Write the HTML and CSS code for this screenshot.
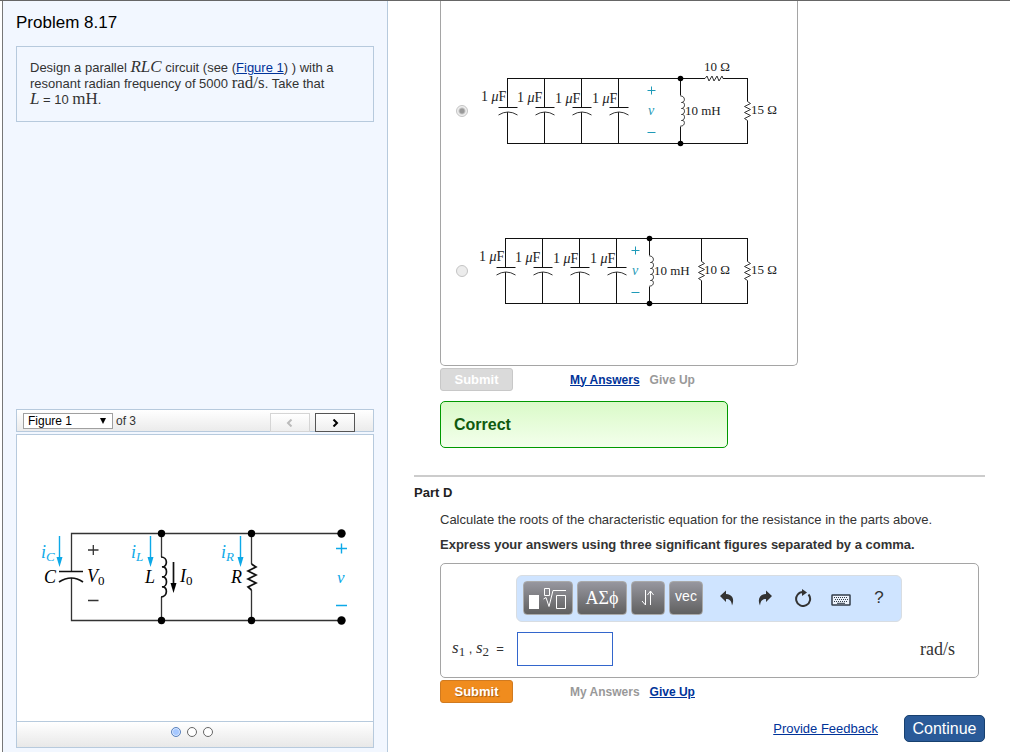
FILE: index.html
```html
<!DOCTYPE html>
<html lang="en">
<head>
<meta charset="utf-8">
<title>Problem 8.17</title>
<link rel="stylesheet" href="styles.css">
</head>
<body>
<svg class="defs" aria-hidden="true">
  <defs>
    <g id="cap">
      <path class="wire" d="M0 0V29M0 34V65"/>
      <path class="wire" d="M-9 29.500H10"/>
      <path class="arc" d="M-9 37Q0.500 31 10 37"/>
    </g>
    <g id="coil">
      <path class="wire" d="M0 0V17M0 48V65"/>
      <path class="arc" d="M0 17.500C5 17.500 5 24 1 24C5 23 5 30 1 30C5 29 5 36 1 36C5 35 5 42 1 42C5 41 5 48 0 47.500"/>
      <circle cx="0" cy="0" r="2.800"/><circle cx="0" cy="65" r="2.800"/>
    </g>
    <g id="res">
      <path class="wire" d="M0 0V23M0 42V65"/>
      <path class="arc" d="M0 23L3 25L-3 28L3 31L-3 34L3 37L-3 40L0 42"/>
    </g>
  </defs>
</svg>
<div class="page">
  <aside class="side">
    <h1>Problem 8.17</h1>
    <p class="statement">Design a parallel <i class="math">RLC</i> circuit (see (<a href="#figure">Figure 1</a>) ) with a resonant radian frequency of 5000 <span class="math">rad/s</span>. Take that <span class="equation"><i class="math">L</i> = 10 <span class="math">mH</span>.</span></p>
    <section class="viewer" id="figure">
      <div class="viewer-nav">
        <span class="picker">
          <select id="fig" aria-label="Figure"><option>Figure 1</option><option>Figure 2</option><option>Figure 3</option></select>
          <svg class="caret" viewBox="0 0 6 6" aria-hidden="true"><path d="M0 0H6L3 6Z"/></svg>
        </span>
        <label for="fig">of 3</label>
        <button class="step step-prev" disabled aria-label="Previous figure"><svg viewBox="0 0 8 8"><path d="M5.500 0.500L2 4L5.500 7.500"/></svg></button>
        <button class="step" aria-label="Next figure"><svg viewBox="0 0 8 8"><path d="M2.500 0.500L6 4L2.500 7.500"/></svg></button>
      </div>
      <div class="figure">
        <svg class="main-circuit" viewBox="36 524 314 108" role="img" aria-label="Parallel RLC circuit">
          <path class="line" d="M71.500 572V533.500H341M71.500 578V620.500H341M161.500 533V557M161.500 597V620M251.500 533V564M251.500 590V620"/>
          <path class="bold" d="M59 571.500H83M59 582Q71.500 574 83 582"/>
          <path class="bold" d="M161 557C168 557 168 567 162 567C168 566 168 577 162 577C168 576 168 587 162 587C168 586 168 597 161 597"/>
          <path class="bold" d="M251.500 564L256 567L248 571L256 575L248 579L256 583L248 587L251.500 590"/>
          <g><circle cx="161.500" cy="533.500" r="3.700"/><circle cx="251.500" cy="533.500" r="3.700"/><circle cx="341.500" cy="533.500" r="4.200"/><circle cx="161.500" cy="620.500" r="3.700"/><circle cx="251.500" cy="620.500" r="3.700"/><circle cx="341.500" cy="620.500" r="4.200"/></g>
          <path class="bold" d="M173.500 562V586"/><path d="M170.500 583H176.500L173.500 593Z"/>
          <path class="line" d="M88 550H98.500M93.300 545V555M88 600.500H98.500"/>
          <g class="cyan">
            <path class="stroke" d="M59.500 536V560M150.500 536V560M240.500 536V560M336 548.500H347M341.500 543.500V553.500M336 605.500H347"/>
            <path d="M56.500 557H62.500L59.500 567ZM147.500 557H153.500L150.500 567ZM237.500 557H243.500L240.500 567Z"/>
            <text x="41" y="558">i<tspan class="sub" dy="3">C</tspan></text>
            <text x="131" y="558">i<tspan class="sub" dy="3">L</tspan></text>
            <text x="221" y="558">i<tspan class="sub" dy="3">R</tspan></text>
            <text x="337" y="583" class="v">v</text>
          </g>
          <text x="44" y="583">C</text>
          <text x="87" y="582">V<tspan class="sub upright" dy="3">0</tspan></text>
          <text x="145" y="583">L</text>
          <text x="180" y="582">I<tspan class="sub upright" dy="3">0</tspan></text>
          <text x="231" y="583">R</text>
        </svg>
      </div>
      <div class="pager">
        <button class="dot on" aria-label="Show figure 1"></button>
        <button class="dot" aria-label="Show figure 2"></button>
        <button class="dot" aria-label="Show figure 3"></button>
      </div>
    </section>
  </aside>

  <main class="content">
    <section class="part">
      <div class="choices">
        <label class="choice">
          <input type="radio" name="circuit" checked disabled>
          <svg class="circuit" viewBox="476 51 304 120" role="img" aria-label="10 ohm in series with 15 ohm">
            <path class="wire" d="M507 78.500H705M723 78.500H748M507 143.500H748"/>
            <path class="arc" d="M705 78.500L707 76L709 81L712 76L714 81L717 76L719 81L722 76L723 78.500"/>
            <use href="#cap" x="507.500" y="78"/><use href="#cap" x="544.500" y="78"/><use href="#cap" x="581.500" y="78"/><use href="#cap" x="618.500" y="78"/>
            <use href="#coil" x="680.500" y="78.500"/><use href="#res" x="747.500" y="78.500"/>
            <g class="farad"><text x="481" y="101">1 <tspan class="mu">μ</tspan>F</text><text x="517" y="102">1 <tspan class="mu">μ</tspan>F</text><text x="555" y="103">1 <tspan class="mu">μ</tspan>F</text><text x="592" y="103">1 <tspan class="mu">μ</tspan>F</text></g>
            <path class="teal-line" d="M647.500 90.500H655.500M651.500 86.500V94.500M647.500 132.500H655.500"/>
            <text class="teal" x="648" y="115">v</text>
            <text x="685" y="115">10 mH</text><text x="704" y="71">10 Ω</text><text x="751" y="114">15 Ω</text>
          </svg>
        </label>
        <label class="choice">
          <input type="radio" name="circuit" disabled>
          <svg class="circuit" viewBox="476 211 304 120" role="img" aria-label="10 ohm in parallel with 15 ohm">
            <path class="wire" d="M505 238.500H748M505 303.500H748"/>
            <use href="#cap" x="505.500" y="238"/><use href="#cap" x="542.500" y="238"/><use href="#cap" x="579.500" y="238"/><use href="#cap" x="616.500" y="238"/>
            <use href="#coil" x="649.500" y="238.500"/><use href="#res" x="701.500" y="238.500"/><use href="#res" x="747.500" y="238.500"/>
            <g class="farad"><text x="479" y="261">1 <tspan class="mu">μ</tspan>F</text><text x="515" y="262">1 <tspan class="mu">μ</tspan>F</text><text x="553" y="263">1 <tspan class="mu">μ</tspan>F</text><text x="590" y="263">1 <tspan class="mu">μ</tspan>F</text></g>
            <path class="teal-line" d="M631.500 250.500H639.500M635.500 246.500V254.500M631.500 292.500H639.500"/>
            <text class="teal" x="632" y="275">v</text>
            <text x="654" y="275">10 mH</text><text x="704" y="274">10 Ω</text><text x="751" y="274">15 Ω</text>
          </svg>
        </label>
      </div>
      <div class="actions">
        <button class="submit" disabled>Submit</button>
        <a href="#answers">My Answers</a>
        <span class="off">Give Up</span>
      </div>
      <div class="feedback">Correct</div>
    </section>

    <section class="part-d">
      <h2>Part D</h2>
      <div class="part">
        <p class="question">Calculate the roots of the characteristic equation for the resistance in the parts above.</p>
        <p class="question strong">Express your answers using three significant figures separated by a comma.</p>
        <div class="answer">
          <div class="toolbar">
            <div class="keys-group">
              <button class="key wide" aria-label="Templates"><svg class="root-icon" viewBox="0 0 38 24"><path class="fill" d="M0 9H10V23H0Z"/><path d="M15.500 2.500H20.500V9.500H15.500ZM14.500 13L17 11.500L20 20.500L24 4.500H37M27.500 9.500H36.500V22.500H27.500Z"/></svg></button>
              <button class="key wide greek">ΑΣϕ</button>
              <button class="key" aria-label="Subscript and superscript"><svg class="arrows-icon" viewBox="0 0 14 16"><path d="M4.500 0V15M1 11L4.500 15L4.500 11M9.500 15V1M6.500 5L9.500 1L12.500 5"/></svg></button>
              <button class="key vec">vec</button>
            </div>
            <button class="tool" aria-label="Undo"><svg class="icon" viewBox="0 0 16 16"><path d="M1 6L7 0.500V4C13 4 16 9 13 15.500C12.500 10.500 10.500 9 7 9V12Z"/></svg></button>
            <button class="tool" aria-label="Redo"><svg class="icon" viewBox="0 0 16 16"><path d="M15 6L9 0.500V4C3 4 0 9 3 15.500C3.500 10.500 5.500 9 9 9V12Z"/></svg></button>
            <button class="tool" aria-label="Reset"><svg class="reset-icon" viewBox="0 0 18 18"><path class="ring" d="M9 3A7 7 0 1 0 14.500 5.500"/><path d="M8 0L13 3.500L8 7Z"/></svg></button>
            <button class="tool" aria-label="Keyboard"><svg class="keyboard-icon" viewBox="0 0 20 12"><rect class="frame" x="1" y="1" width="18" height="10" rx="0.500"/><path class="keys" d="M3 3.500H17M4 5.500H17M3 7.500H17"/><path class="bar" d="M6 9.300H14"/></svg></button>
            <button class="tool help" aria-label="Help">?</button>
          </div>
          <div class="entry">
            <label for="roots"><i class="var">s</i><sub>1</sub> , <i class="var">s</i><sub>2</sub>&nbsp; =</label>
            <input id="roots" type="text">
            <span class="unit">rad/s</span>
          </div>
        </div>
        <div class="actions">
          <button class="submit">Submit</button>
          <span class="off">My Answers</span>
          <a href="#giveup">Give Up</a>
        </div>
      </div>
    </section>
    <footer>
      <a href="#feedback">Provide Feedback</a>
      <button class="continue">Continue</button>
    </footer>
  </main>
</div>
</body>
</html>
```

FILE: styles.css
```css
* { box-sizing: border-box; }
body {
  margin: 0;
  font: 13px/16px "Liberation Sans", Arial, sans-serif;
  color: #333;
  background: #fff;
}
h1, h2, p { margin: 0; }
button, input, select { font-family: inherit; margin: 0; }
button { padding: 0; }
a { color: #039; }
svg { display: block; flex: none; }
.defs { position: absolute; width: 0; height: 0; }

.page {
  display: grid;
  grid-template-columns: minmax(0, 386fr) minmax(0, 622fr);
  min-height: 100vh;
  border-top: 1px solid #666;
  padding-left: 2px;
}

.side {
  display: flex;
  flex-direction: column;
  padding: 12px 13px 4px;
  background: #f2f7ff;
  border-left: 1px solid #777;
  border-right: 1px solid #b7cadd;
}
h1 {
  font-size: 17px;
  line-height: 20px;
  font-weight: normal;
  color: #000;
}
.statement {
  margin-top: 13px;
  padding: 13px 32px 13px 13px;
  border: 1px solid #b7cadd;
}
.equation { white-space: nowrap; }
.math {
  font-family: "Liberation Serif", serif;
  font-size: 17px;
  line-height: 12px;
}

.viewer { margin-top: auto; }
.viewer-nav {
  display: flex;
  align-items: flex-start;
  height: 23px;
  padding: 3px 18px 0 6px;
  border: 1px solid #b7cadd;
  background: linear-gradient(#fff, #ebebeb);
  font-size: 12px;
}
.picker { position: relative; margin-right: 3px; }
.picker select {
  display: block;
  width: 90px;
  height: 16px;
  padding: 0 4px;
  appearance: none;
  border: 1px solid #a0a0a0;
  border-radius: 0;
  background: #fff;
  color: #000;
  font-size: 12px;
  line-height: 14px;
}
.caret { position: absolute; right: 7px; top: 5px; width: 6px; height: 6px; pointer-events: none; }
.step {
  display: grid;
  place-items: center;
  width: 40px;
  height: 19px;
  margin-left: 5px;
  border: 1px solid #555;
  background: linear-gradient(#fff, #eee);
}
.step-prev { margin-left: auto; border-color: #d5d5d5; }
.step svg { width: 8px; height: 8px; fill: none; stroke: #000; stroke-width: 2; }
.step-prev svg { stroke: #bbb; }
.figure {
  margin-top: 2px;
  padding: 89px 19px;
  border: 1px solid #b7cadd;
  background: #fff;
}
.main-circuit { width: 314px; height: 108px; }
.main-circuit text { font: italic 18px "Liberation Serif", serif; }
.main-circuit .sub { font-size: 13px; }
.main-circuit .upright { font-style: normal; }
.main-circuit .v { font-size: 17px; }
.line { fill: none; stroke: #333; stroke-width: 1.3; }
.bold { fill: none; stroke: #111; stroke-width: 1.7; }
.cyan { fill: #0da9e8; }
.stroke { fill: none; stroke: #0da9e8; stroke-width: 1.4; }
.pager {
  display: flex;
  justify-content: center;
  gap: 6px;
  height: 26px;
  padding: 5px 6px 0 0;
  border: 1px solid #b7cadd;
  border-top: 0;
  background: linear-gradient(#fff, #e8e8e8);
}
.dot {
  width: 10px;
  height: 10px;
  border: 1px solid #666;
  border-radius: 50%;
  background: #fff;
}
.dot.on { border-color: #5c83bd; background: #a6c8ff; box-shadow: inset 0 0 0 1px #dceaff; }

.content { padding: 0 25px 0 26px; }
.part { padding-left: 26px; }
.choices {
  display: flex;
  flex-direction: column;
  gap: 40px;
  width: fit-content;
  padding: 50px 17px 34px 15px;
  border: 1px solid #a5a5a5;
  border-top: 0;
  border-radius: 0 0 5px 5px;
}
.choice { display: flex; align-items: center; gap: 8px; }
.choice input {
  appearance: none;
  width: 12px;
  height: 12px;
  margin: 0;
  border: 1px solid #c4c4c4;
  border-radius: 50%;
  background: #ececec;
}
.choice input:checked { background: radial-gradient(circle, #999 0 2px, #eee 4px); }
.circuit { width: 304px; height: 120px; }
.circuit text { font: 13px "Liberation Serif", serif; fill: #222; }
.circuit .farad text { font-size: 14px; }
.circuit .mu { font-style: italic; }
.circuit .teal { font-style: italic; font-size: 14px; fill: #1e9ab8; }
.teal-line { stroke: #1e9ab8; }
.wire { fill: none; stroke: #111; }
.arc { fill: none; stroke: #333; }

.actions {
  display: flex;
  align-items: center;
  gap: 10px;
  margin-top: 2px;
  font-size: 12px;
  font-weight: bold;
}
.submit {
  width: 73px;
  height: 23px;
  margin-right: 47px;
  border: 1px solid #d07a20;
  border-radius: 3px;
  background: #f08c1e;
  color: #fff;
  font-size: 13px;
  font-weight: bold;
  text-shadow: 1px 1px 1px #a65c10;
}
.submit:disabled { border-color: #c8c8c8; background: #dadada; text-shadow: none; }
.off { color: #999; }
.feedback {
  width: 288px;
  margin-top: 10px;
  padding: 13px;
  border: 1px solid #090;
  border-radius: 5px;
  background: linear-gradient(#dafac8, #f3ffec);
  color: #0f5a0f;
  font-size: 16px;
  line-height: 19px;
  font-weight: bold;
}

.part-d { margin-top: 27px; border-top: 2px solid #ccc; }
h2 { padding-top: 8px; font-size: 13px; line-height: 16px; color: #222; }
.question { margin-top: 11px; }
.strong { margin-top: 9px; font-weight: bold; }
.answer {
  margin: 10px 6px 0 0;
  padding: 11px 23px 11px 11px;
  border: 1px solid #a5a5a5;
  border-radius: 5px;
}
.toolbar {
  display: flex;
  width: fit-content;
  margin-left: 64px;
  padding: 5px 3px 6px 6px;
  border: 1px solid #d8dde2;
  border-radius: 6px;
  background: #cfe4ff;
}
.keys-group { display: flex; gap: 4px; margin-right: 5px; }
.key {
  display: grid;
  place-items: center;
  width: 34px;
  height: 34px;
  border: 1px solid #aaa;
  border-radius: 4px;
  background: linear-gradient(#97979f, #606060);
  color: #fff;
}
.wide { width: 50px; }
.greek { font: 18px "Liberation Serif", serif; }
.vec { font-size: 14px; padding-bottom: 4px; }
.root-icon { width: 38px; height: 24px; fill: none; stroke: #fff; }
.root-icon .fill { fill: #fff; stroke: none; }
.arrows-icon { width: 14px; height: 16px; fill: none; stroke: #fff; }
.tool {
  display: grid;
  place-items: center;
  width: 38px;
  height: 34px;
  border: 0;
  background: none;
  color: #333;
}
.help { font-size: 17px; }
.icon { width: 16px; height: 16px; fill: #333; }
.reset-icon { width: 18px; height: 18px; fill: #333; }
.ring { fill: none; stroke: #333; stroke-width: 2; }
.keyboard-icon { width: 20px; height: 12px; margin-top: 4px; }
.frame { fill: #edf3fc; stroke: #333d49; stroke-width: 1.5; }
.keys { stroke: #333d49; stroke-dasharray: 1 1; }
.bar { stroke: #333d49; }
.entry { display: flex; align-items: center; margin-top: 10px; }
.entry label { width: 65px; white-space: nowrap; }
.var { font: italic 17px/12px "Liberation Serif", serif; }
.entry sub { font: 13px/1 "Liberation Serif", serif; vertical-align: -3px; }
.entry input {
  width: 96px;
  height: 34px;
  border: 1px solid #36c;
  background: #fff;
  font-size: 14px;
}
.unit { margin-left: auto; font: 18px/20px "Liberation Serif", serif; }

footer {
  display: flex;
  justify-content: flex-end;
  align-items: center;
  gap: 26px;
  margin-top: 12px;
}
.continue {
  width: 81px;
  height: 27px;
  border: 1px solid #17406f;
  border-radius: 5px;
  background: #2a5a98;
  color: #fff;
  font-size: 16px;
}
```
